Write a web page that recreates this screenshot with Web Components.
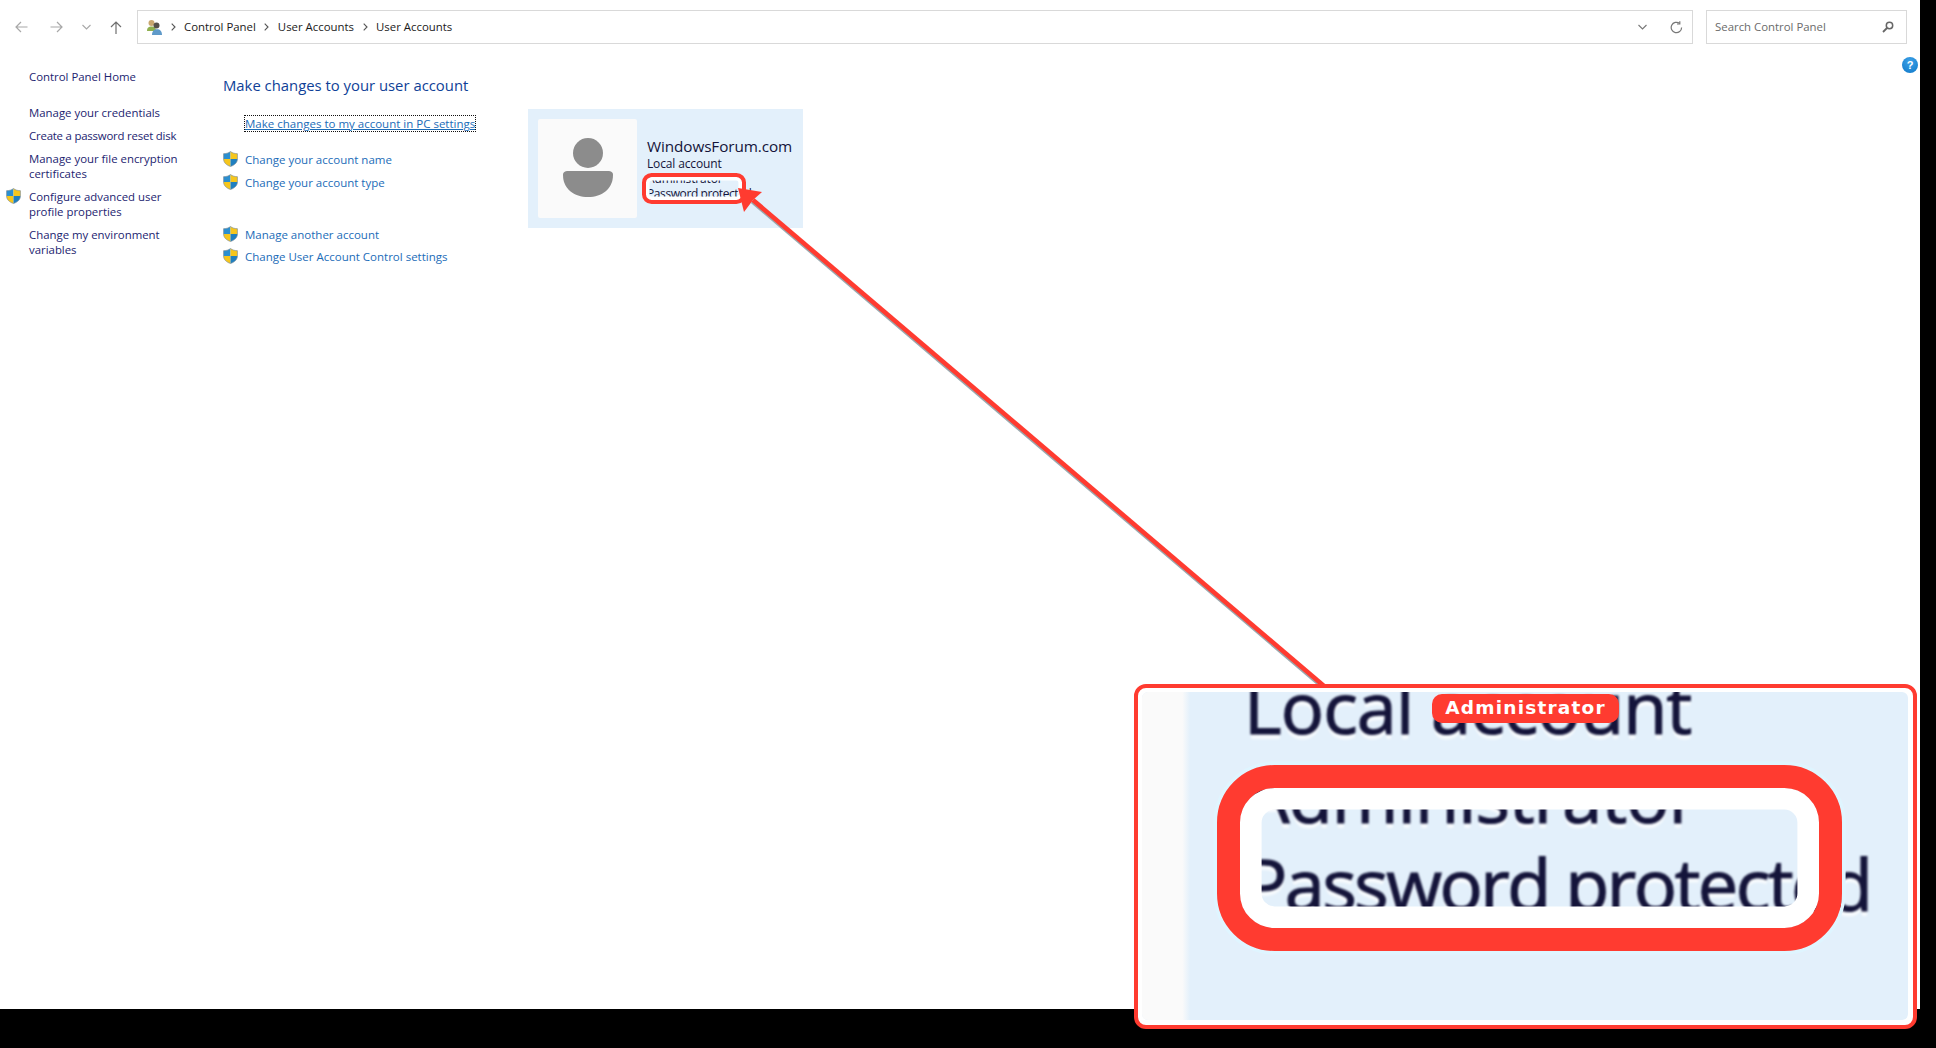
<!DOCTYPE html>
<html lang="en">
<head>
<meta charset="utf-8">
<title>User Accounts</title>
<style>
    html { background: #000; }
    body { margin: 0; background: #000; overflow: hidden; height: 1048px; font-family: "Open Sans", "Noto Sans", sans-serif; }
</style>
</head>
<body>
<cp-window>
    <cp-toolbar slot="toolbar"></cp-toolbar>
    <side-nav slot="side">
        <nav-item class="home">Control Panel Home</nav-item>
        <nav-item>Manage your credentials</nav-item>
        <nav-item class="tight">Create a password reset disk</nav-item>
        <nav-item>Manage your file encryption<br>certificates</nav-item>
        <nav-item shield>Configure advanced user<br>profile properties</nav-item>
        <nav-item>Change my environment<br>variables</nav-item>
    </side-nav>
    <task-panel slot="tasks"></task-panel>
    <account-card slot="card"></account-card>
    <zoom-callout slot="overlay"></zoom-callout>
</cp-window>

<script>
const RED = '#ff3b30';

class UacShield extends HTMLElement {
    connectedCallback() {
        this.attachShadow({ mode: 'open' });
        this.shadowRoot.innerHTML = `
            <style>
                :host { display: inline-block; width: 15px; height: 16px; line-height: 0; }
            </style>
            <svg width="15" height="16" viewBox="1 .5 14 15">
                <path d="M8 1C6 2.5 4 3 1.5 3V8H8Z" fill="#2b8fd0"/>
                <path d="M8 1C10 2.5 12 3 14.5 3V8H8Z" fill="#f6c61c"/>
                <path d="M1.5 8C1.5 11.5 4.5 14 8 15V8Z" fill="#f6c61c"/>
                <path d="M14.5 8C14.5 11.5 11.5 14 8 15V8Z" fill="#1f7fc0"/>
                <path d="M8 1C6 2.5 4 3 1.5 3V8C1.5 11.5 4.5 14 8 15C11.5 14 14.5 11.5 14.5 8V3C12 3 10 2.5 8 1Z" fill="none" stroke="#7d8b94" stroke-width=".6"/>
            </svg>
        `;
    }
}
customElements.define('uac-shield', UacShield);

class CpToolbar extends HTMLElement {
    connectedCallback() {
        this.attachShadow({ mode: 'open' });
        this.shadowRoot.innerHTML = `
            <style>
                :host { display: flex; height: 54px; box-sizing: border-box; padding: 10px 13px 10px 0; font-size: 11.4px; color: #1a1a1a; }
                .btns { width: 137px; display: flex; align-items: center; flex: none; }
                .btn { display: flex; align-items: center; justify-content: center; flex: none; }
                .bar {
                    flex: 1; display: flex; align-items: center; box-sizing: border-box;
                    border: 1.5px solid #d9d9d9; height: 34px; padding-left: 8px;
                }
                .crumb { white-space: nowrap; line-height: 30px; margin-top: -1px; }
                .sep { width: 22px; display: flex; justify-content: center; flex: none; }
                .first { width: 21px; }
                .end { margin-left: auto; display: flex; align-items: center; gap: 23px; padding-right: 9px; }
                .search {
                    width: 201px; flex: none; margin-left: 13px; box-sizing: border-box; height: 34px;
                    border: 1.5px solid #d9d9d9; display: flex; align-items: center; justify-content: space-between;
                    padding: 0 12px 0 8px; color: #6b6b6b;
                }
            </style>
            <div class="btns">
                <span class="btn" style="margin-left:15px">
                    <svg width="13" height="12" viewBox="0 0 13 12" fill="none" stroke="#a8a8a8" stroke-width="1.2"><path d="M12.5 6H1M6 1L1 6L6 11"/></svg>
                </span>
                <span class="btn" style="margin-left:22px">
                    <svg width="13" height="12" viewBox="0 0 13 12" fill="none" stroke="#a8a8a8" stroke-width="1.2"><path d="M.5 6H12M7 1L12 6L7 11"/></svg>
                </span>
                <span class="btn" style="margin-left:19px">
                    <svg width="9" height="6" viewBox="0 0 9 6" fill="none" stroke="#a8a8a8" stroke-width="1.1"><path d="M.5 1L4.5 5L8.5 1"/></svg>
                </span>
                <span class="btn" style="margin-left:19px">
                    <svg width="12" height="13" viewBox="0 0 12 13" fill="none" stroke="#6f6f6f" stroke-width="1.2"><path d="M6 13V1M1 6L6 1L11 6"/></svg>
                </span>
            </div>
            <div class="bar">
                <svg width="17" height="17" viewBox="0 0 17 17" style="flex:none">
                    <circle cx="5.5" cy="4" r="3" fill="#c9a770"/>
                    <path d="M1 12C1 8.5 3 7.5 5.5 7.5S10 8.5 10 12Z" fill="#8fb04f"/>
                    <circle cx="10.5" cy="6.5" r="3" fill="#55504a"/>
                    <path d="M6 16C6 12 8 10.2 11 10.2S16 12 16 16Z" fill="#5f9ac9"/>
                </svg>
                <span class="sep first"><svg width="5" height="8" viewBox="0 0 5 8" fill="none" stroke="#555" stroke-width="1.1"><path d="M.7 .7L4 4L.7 7.3"/></svg></span>
                <span class="crumb">Control Panel</span>
                <span class="sep"><svg width="5" height="8" viewBox="0 0 5 8" fill="none" stroke="#555" stroke-width="1.1"><path d="M.7 .7L4 4L.7 7.3"/></svg></span>
                <span class="crumb">User Accounts</span>
                <span class="sep"><svg width="5" height="8" viewBox="0 0 5 8" fill="none" stroke="#555" stroke-width="1.1"><path d="M.7 .7L4 4L.7 7.3"/></svg></span>
                <span class="crumb">User Accounts</span>
                <span class="end">
                    <svg width="9" height="6" viewBox="0 0 9 6" fill="none" stroke="#777" stroke-width="1.1"><path d="M.5 1L4.5 5L8.5 1"/></svg>
                    <svg width="13" height="13" viewBox="0 0 13 13" fill="none" stroke="#777" stroke-width="1.2"><path d="M11.6 6.5A5.2 5.2 0 1 1 9.6 2.4"/><path d="M9.8 .2V3H7"/></svg>
                </span>
            </div>
            <div class="search">
                <span style="margin-top:-1px">Search Control Panel</span>
                <svg width="12" height="12" viewBox="0 0 12 12" fill="none" stroke="#666"><circle cx="7.5" cy="4.5" r="3.2" stroke-width="1.5"/><path d="M5 7L1 11" stroke-width="1.8"/></svg>
            </div>
        `;
    }
}
customElements.define('cp-toolbar', CpToolbar);

class SideNav extends HTMLElement {
    connectedCallback() {
        this.attachShadow({ mode: 'open' });
        this.shadowRoot.innerHTML = `
            <style>
                :host { display: flex; flex-direction: column; gap: 8px; box-sizing: border-box; width: 223px; flex: none; padding: 15px 0 0 0; }
                ::slotted(.home) { margin-bottom: 13px; }
                ::slotted(.tight) { letter-spacing: -.2px; }
            </style>
            <slot></slot>
        `;
    }
}
customElements.define('side-nav', SideNav);

class NavItem extends HTMLElement {
    connectedCallback() {
        this.attachShadow({ mode: 'open' });
        const icon = this.hasAttribute('shield') ? '<uac-shield></uac-shield>' : '';
        this.shadowRoot.innerHTML = `
            <style>
                :host { display: grid; grid-template-columns: 29px 1fr; font-size: 11.4px; line-height: 15px; color: #1c2470; white-space: nowrap; }
                .ico { padding-left: 6px; height: 15px; margin-top: -1px; }
            </style>
            <span class="ico">${icon}</span>
            <span><slot></slot></span>
        `;
    }
}
customElements.define('nav-item', NavItem);

class TaskLink extends HTMLElement {
    connectedCallback() {
        this.attachShadow({ mode: 'open' });
        const icon = this.hasAttribute('shield') ? '<uac-shield></uac-shield>' : '';
        this.shadowRoot.innerHTML = `
            <style>
                :host { display: flex; font-size: 11.5px; line-height: 15px; color: #1b6cb8; white-space: nowrap; }
                .ico { width: 22px; height: 15px; flex: none; margin-top: -1px; }
                :host([focused]) .txt { outline: 1px dotted #111; text-decoration: underline; }
            </style>
            <span class="ico">${icon}</span>
            <span class="txt"><slot></slot></span>
        `;
    }
}
customElements.define('task-link', TaskLink);

class TaskPanel extends HTMLElement {
    connectedCallback() {
        this.attachShadow({ mode: 'open' });
        this.shadowRoot.innerHTML = `
            <style>
                :host { display: block; width: 305px; flex: none; padding-top: 21px; }
                h1 { margin: 0 0 21px; font-size: 14.85px; line-height: 20px; font-weight: 400; color: #0f3f97; white-space: nowrap; }
            </style>
            <h1>Make changes to your user account</h1>
            <task-link focused>Make changes to my account in PC settings</task-link>
            <task-link shield style="margin-top:20.5px">Change your account name</task-link>
            <task-link shield style="margin-top:8px">Change your account type</task-link>
            <task-link shield style="margin-top:37px">Manage another account</task-link>
            <task-link shield style="margin-top:7px">Change User Account Control settings</task-link>
        `;
    }
}
customElements.define('task-panel', TaskPanel);

// the three text lines with the red ring over them; everything is in em so
// the callout can show the same thing six times larger
class AccountLines extends HTMLElement {
    connectedCallback() {
        this.attachShadow({ mode: 'open' });
        this.shadowRoot.innerHTML = `
            <style>
                :host { display: block; position: relative; line-height: 1.23em; color: #14143a; white-space: nowrap; }
                .txt {
                    filter: var(--text-filter, none); text-shadow: var(--text-halo, none);
                    -webkit-text-stroke: var(--text-stroke, 0); letter-spacing: -.012em;
                }
                .pw { letter-spacing: -.034em; }
                .ring {
                    position: absolute; left: var(--ring-left, -.38em); top: var(--ring-top, 1.3em); width: var(--ring-width, 8.6em); height: 2.58em; box-sizing: border-box;
                    border: var(--ring-border, .34em) solid ${RED}; border-radius: .8em; background: transparent;
                    box-shadow: inset 0 0 0 .3em #fff, 0 0 0 .05em #dff5ff;
                }
            </style>
            <div class="txt">
                <div>Local account</div>
                <div>Administrator</div>
                <div class="pw">Password protected</div>
            </div>
            <div class="ring"></div>
        `;
    }
}
customElements.define('account-lines', AccountLines);

class AccountCard extends HTMLElement {
    connectedCallback() {
        this.attachShadow({ mode: 'open' });
        this.shadowRoot.innerHTML = `
            <style>
                :host { display: flex; box-sizing: border-box; width: 275px; height: 119px; margin-top: 55px; padding: 10px; gap: 10px; background: #e3f0fb; flex: none; }
                .pic { width: 99px; height: 99px; background: #fafafa; border-radius: 2px; flex: none; display: flex; align-items: center; justify-content: center; }
                .info { padding-top: 16.5px; }
                .name { font-size: 15.3px; line-height: 21.5px; color: #14143a; white-space: nowrap; letter-spacing: -.1px; }
                account-lines { font-size: 12px; letter-spacing: -.2px; }
            </style>
            <div class="pic">
                <svg width="52" height="64" viewBox="0 0 52 64">
                    <circle cx="26" cy="16" r="15" fill="#8c8c8c"/>
                    <path d="M1 38C1 35 3 34 6 34H46C49 34 51 35 51 38C51 52 40 60 26 60S1 52 1 38Z" fill="#8c8c8c"/>
                </svg>
            </div>
            <div class="info">
                <div class="name">WindowsForum.com</div>
                <account-lines></account-lines>
            </div>
        `;
    }
}
customElements.define('account-card', AccountCard);

class ZoomCallout extends HTMLElement {
    connectedCallback() {
        this.attachShadow({ mode: 'open' });
        this.shadowRoot.innerHTML = `
            <style>
                :host {
                    display: block; position: absolute; left: 1134px; top: 684px; width: 783px; height: 345px; box-sizing: border-box;
                    border: 4px solid ${RED}; border-radius: 12px; background: #fff; padding: 4px 5px 5px 4px;
                }
                .view { height: 100%; display: flex; overflow: hidden; border-radius: 6px; background: #e3f0fb; }
                .strip { width: 48px; flex: none; background: linear-gradient(90deg, #fafafa 0 84%, #e3f0fb 100%); }
                account-lines {
                    margin: -30px 0 0 54px; font-size: 72px; letter-spacing: -1.2px;
                    --text-filter: blur(1.3px);
                    --text-stroke: 1.2px;
                    --text-halo: 0 5px 1px rgba(255,255,255,.75);
                    --ring-left: -.38em;
                    --ring-top: 1.43em;
                    --ring-width: 8.68em;
                    --ring-border: .32em;
                }
                .badge {
                    position: absolute; left: 294px; top: 6px; height: 29px; width: 187px; box-sizing: border-box;
                    border-radius: 10px; background: ${RED}; color: #fff; text-align: center;
                    font: 700 18.5px/28px "DejaVu Sans", sans-serif; letter-spacing: 1.2px;
                }
            </style>
            <div class="view">
                <div class="strip"></div>
                <account-lines></account-lines>
            </div>
            <div class="badge">Administrator</div>
        `;
    }
}
customElements.define('zoom-callout', ZoomCallout);

class CpWindow extends HTMLElement {
    connectedCallback() {
        this.attachShadow({ mode: 'open' });
        this.shadowRoot.innerHTML = `
            <style>
                :host { display: block; position: relative; width: 1920px; height: 1009px; background: #fff; }
                .content { display: flex; }
                .help {
                    position: absolute; left: 1902px; top: 57px; width: 16px; height: 16px; border-radius: 50%;
                    background: radial-gradient(circle at 50% 30%, #3da2e8, #0f78c8); color: #fff;
                    font: 700 11px/16px "Liberation Sans", sans-serif; text-align: center;
                }
                .arrow { position: absolute; left: 0; top: 0; pointer-events: none; }
            </style>
            <slot name="toolbar"></slot>
            <div class="content">
                <slot name="side"></slot>
                <slot name="tasks"></slot>
                <slot name="card"></slot>
            </div>
            <div class="help">?</div>
            <svg class="arrow" width="1920" height="1009" viewBox="0 0 1920 1009">
                <line x1="752.3" y1="201.2" x2="1323" y2="687" stroke="#9aa8ae" stroke-width="4.6"/>
                <line x1="753" y1="200" x2="1324" y2="686" stroke="${RED}" stroke-width="4.6"/>
                <polygon points="738,188 762,192 753,200 744,212" fill="${RED}"/>
            </svg>
            <slot name="overlay"></slot>
        `;
    }
}
customElements.define('cp-window', CpWindow);
</script>
</body>
</html>
